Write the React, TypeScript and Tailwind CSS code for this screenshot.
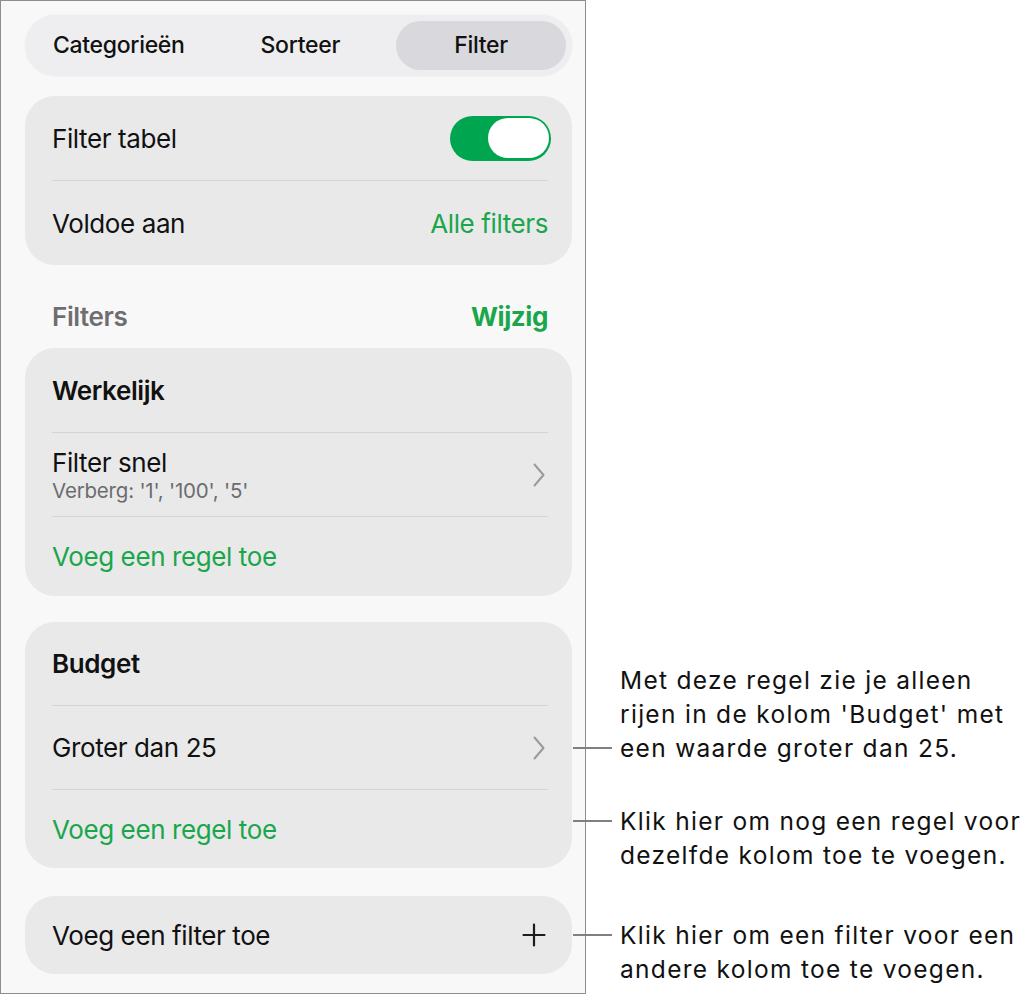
import React from "react";

const UI = { fontFamily: "Inter, 'Noto Sans', sans-serif" };

function Chevron() {
  return (
    <svg width="14" height="26" viewBox="0 0 14 26" fill="none" className="shrink-0">
      <path d="M2.5 2.5 L11.5 13 L2.5 23.5" stroke="#9a9a9c" strokeWidth="2" strokeLinecap="round" strokeLinejoin="round" />
    </svg>
  );
}

function Plus() {
  return (
    <svg width="24" height="24" viewBox="0 0 24 24" fill="none" className="shrink-0">
      <path d="M12 1.5 V22.5 M1.5 12 H22.5" stroke="#1c1c1e" strokeWidth="2.2" strokeLinecap="round" />
    </svg>
  );
}

function Divider() {
  return <div className="ml-[27px] mr-[24px] h-px bg-[#d3d3d5]" />;
}

function Toggle() {
  return (
    <div className="mr-[-3px] flex h-[45px] w-[101px] items-center justify-end rounded-full bg-[#00a54f] p-[2px]">
      <div className="h-[40px] w-[61px] rounded-full bg-white" />
    </div>
  );
}

function RuleCard({
  title,
  rule,
  detail,
  heights,
}: {
  title: string;
  rule: string;
  detail?: string;
  heights: [string, string, string];
}) {
  return (
    <div className="rounded-[30px] bg-[#e9e9ea]">
      <div className={`flex items-center px-[27px] ${heights[0]}`}>
        <span className="text-[26px] font-semibold tracking-[-0.4px] text-[#111]">{title}</span>
      </div>
      <Divider />
      <div className={`flex items-center justify-between pl-[27px] pr-[26px] ${heights[1]}`}>
        <div className="flex flex-col">
          <span className="text-[26px] leading-[31px] tracking-[-0.4px] text-[#111]">{rule}</span>
          {detail && (
            <span className="text-[20.5px] leading-[25px] tracking-[-0.2px] text-[#6c6c70]">{detail}</span>
          )}
        </div>
        <Chevron />
      </div>
      <Divider />
      <div className={`flex items-center px-[27px] ${heights[2]}`}>
        <span className="text-[26px] tracking-[-0.4px] text-[#1aa64b]">Voeg een regel toe</span>
      </div>
    </div>
  );
}

function Note({ lines, align }: { lines: string[]; align: "start" | "end" }) {
  return (
    <div className={`flex ${align === "end" ? "items-end" : "items-start"}`}>
      <div className="flex h-[34px] w-[39px] shrink-0 items-center">
        <div className="h-[2px] w-full bg-[#808080]" />
      </div>
      <div className="ml-[8px] text-[24.5px] leading-[34px] tracking-[1.3px] text-[#111]">
        {lines.map((l) => (
          <div key={l} className="whitespace-nowrap">{l}</div>
        ))}
      </div>
    </div>
  );
}

export default function App() {
  return (
    <div className="flex h-[995px] w-[1032px] items-start overflow-hidden bg-white" style={UI}>
      {/* settings panel */}
      <div className="flex h-[994px] w-[586px] shrink-0 flex-col border border-[#8e8e8e] bg-[#f8f8f8] pl-[24px] pr-[13px] pt-[14px]">
        {/* segmented control */}
        <div className="flex h-[61px] items-center rounded-full bg-[#eeeef0] p-[6px] ring-1 ring-[#f3f3f5]">
          <div className="flex h-full flex-1 items-center justify-center pr-[6px] text-[23px] font-medium tracking-[-0.3px] text-[#111]">
            Categorieën
          </div>
          <div className="flex h-full flex-1 items-center justify-center text-[23px] font-medium tracking-[-0.3px] text-[#111]">
            Sorteer
          </div>
          <div className="ml-[8px] flex h-full w-[170px] items-center justify-center rounded-full bg-[#d9d9dd] text-[23px] font-medium tracking-[-0.3px] text-[#111]">
            Filter
          </div>
        </div>

        {/* table filter settings */}
        <div className="mt-[20px] rounded-[30px] bg-[#e9e9ea]">
          <div className="flex h-[84px] items-center justify-between pl-[27px] pr-[24px]">
            <span className="text-[26px] tracking-[-0.4px] text-[#111]">Filter tabel</span>
            <Toggle />
          </div>
          <Divider />
          <div className="flex h-[84px] items-center justify-between pl-[27px] pr-[24px]">
            <span className="text-[26px] tracking-[-0.4px] text-[#111]">Voldoe aan</span>
            <span className="text-[26px] tracking-[-0.4px] text-[#1aa64b]">Alle filters</span>
          </div>
        </div>

        {/* filters header */}
        <div className="flex h-[83px] items-end justify-between pb-[16px] pl-[27px] pr-[24px]">
          <span className="text-[26px] leading-[31px] font-semibold tracking-[-0.4px] text-[#6e6e72]">Filters</span>
          <span className="text-[26px] leading-[31px] font-bold tracking-[-0.4px] text-[#1aa64b]">Wijzig</span>
        </div>

        <RuleCard
          title="Werkelijk"
          rule="Filter snel"
          detail="Verberg: '1', '100', '5'"
          heights={["h-[84px]", "h-[83px]", "h-[79px]"]}
        />

        <div className="mt-[26px]">
          <RuleCard
            title="Budget"
            rule="Groter dan 25"
            heights={["h-[83px]", "h-[83px]", "h-[78px]"]}
          />
        </div>

        <div className="mt-[28px] flex h-[78px] items-center justify-between rounded-[30px] bg-[#e9e9ea] pl-[27px] pr-[26px]">
          <span className="text-[26px] tracking-[-0.4px] text-[#111]">Voeg een filter toe</span>
          <Plus />
        </div>
      </div>

      {/* callouts */}
      <div className="ml-[-13px] flex flex-col pt-[663px]">
        <Note
          align="end"
          lines={[
            "Met deze regel zie je alleen",
            "rijen in de kolom 'Budget' met",
            "een waarde groter dan 25.",
          ]}
        />
        <div className="mt-[39px]">
          <Note align="start" lines={["Klik hier om nog een regel voor", "dezelfde kolom toe te voegen."]} />
        </div>
        <div className="mt-[46px]">
          <Note align="start" lines={["Klik hier om een filter voor een", "andere kolom toe te voegen."]} />
        </div>
      </div>
    </div>
  );
}
